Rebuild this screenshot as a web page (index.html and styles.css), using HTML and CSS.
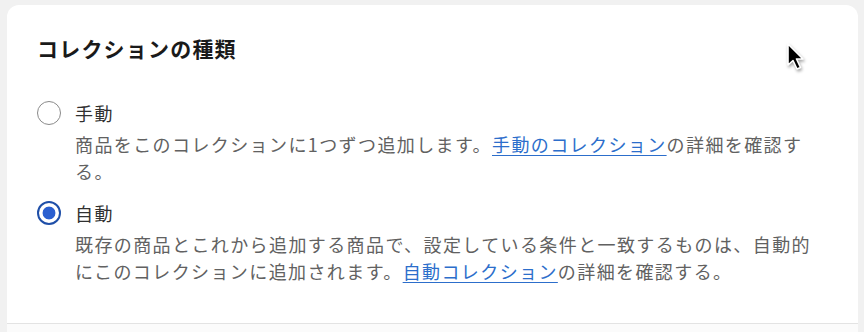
FILE: index.html
```html
<!DOCTYPE html>
<html lang="ja">
<head>
    <meta charset="UTF-8">
    <meta name="viewport" content="width=device-width, initial-scale=1.0">
    <title>コレクションの種類</title>
    <link rel="stylesheet" href="styles.css">
</head>
<body>
    <div class="card">
        <h2 class="card-title">コレクションの種類</h2>

        <div class="choice">
            <label class="choice-row">
                <span class="radio"></span>
                <span class="choice-label">手動</span>
            </label>
            <p class="choice-help">商品をこのコレクションに1つずつ追加します。<a href="#">手動のコレクション</a>の詳細を確認する。</p>
        </div>

        <div class="choice choice-second">
            <label class="choice-row">
                <span class="radio checked"></span>
                <span class="choice-label">自動</span>
            </label>
            <p class="choice-help">既存の商品とこれから追加する商品で、設定している条件と一致するものは、自動的にこのコレクションに追加されます。<a href="#">自動コレクション</a>の詳細を確認する。</p>
        </div>
    </div>
    <div class="next-card"></div>

    <svg class="cursor" width="22" height="30" viewBox="0 0 22 30">
        <path d="M2 2 L2 23 L7 18.5 L11 27 L14.5 25.5 L10.5 17 L17 17 Z" fill="#000" stroke="#fff" stroke-width="1.6" stroke-linejoin="round"/>
    </svg>
</body>
</html>
```

FILE: styles.css
```css
body {
    margin: 0;
    padding: 5px 6px 0 7px;
    background-color: #f1f1f1;
    font-family: "Noto Sans CJK JP", "Noto Sans", sans-serif;
    color: #303030;
    position: relative;
    overflow: hidden;
}
.card {
    background: #fff;
    border-radius: 12px 12px 0 0;
    padding: 29px 34px 0 30px;
    height: 289px;
    border-bottom: 1px solid #e3e3e3;
}
.card-title {
    margin: 0;
    font-size: 21px;
    line-height: 28px;
    font-weight: 600;
    letter-spacing: 1.2px;
    color: #1a1a1a;
}
.choice {
    margin-top: 37px;
}
.choice-second {
    margin-top: 14px;
}
.choice-row {
    display: flex;
    align-items: center;
    gap: 14px;
    height: 28px;
}
.radio {
    width: 24px;
    height: 24px;
    border: 1.5px solid #8a8a8a;
    border-radius: 50%;
    box-sizing: border-box;
    flex: none;
}
.radio.checked {
    border: 2px solid #1f4fa8;
    background: radial-gradient(circle, #2a5fd0 0, #2a5fd0 6px, #fff 6.8px);
}
.choice-label {
    font-size: 18px;
    letter-spacing: 1.4px;
    color: #303030;
}
.choice-help {
    margin: 4px 0 0 38px;
    font-size: 18px;
    line-height: 27px;
    letter-spacing: 1.4px;
    color: #616161;
}
.choice-help a {
    color: #2c6ecb;
    text-decoration: underline;
    text-decoration-thickness: 1px;
    text-underline-offset: 3px;
}
.next-card {
    background: #fbfbfb;
    height: 20px;
}
.cursor {
    position: absolute;
    left: 786px;
    top: 42px;
    filter: drop-shadow(1px 2px 1.5px rgba(0,0,0,0.35));
}
```
